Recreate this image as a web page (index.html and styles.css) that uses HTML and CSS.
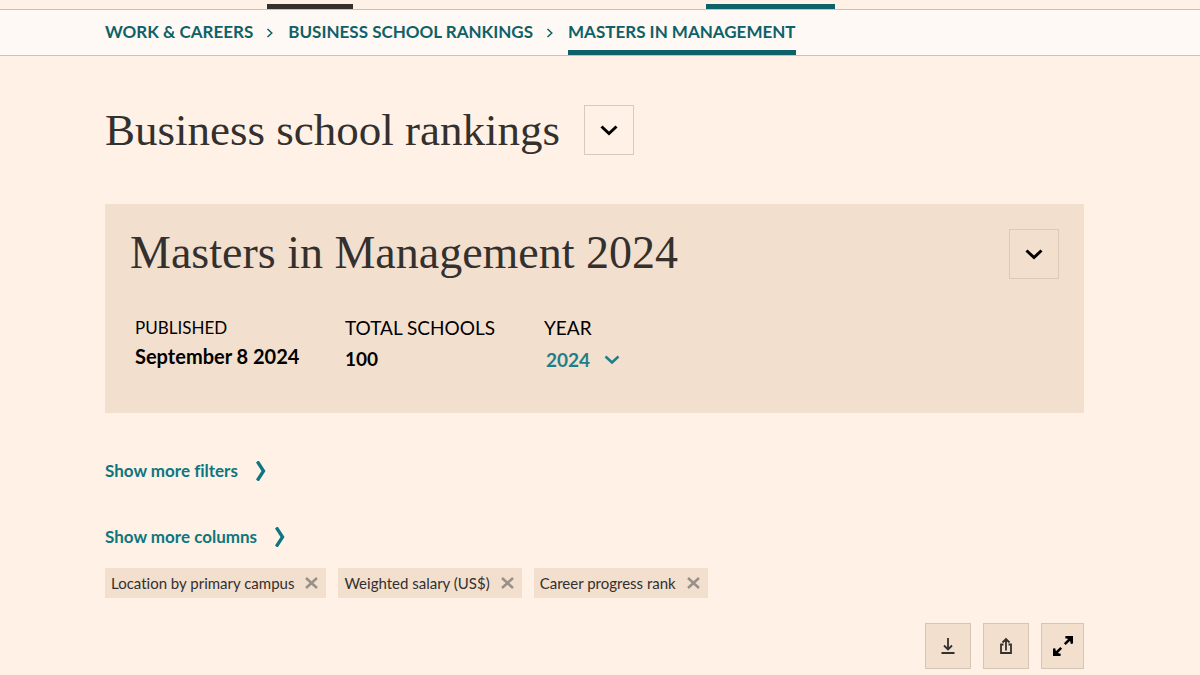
FILE: index.html
```html
<!DOCTYPE html>
<html lang="en">
<head>
<meta charset="utf-8">
<meta name="viewport" content="width=device-width, initial-scale=1">
<title>Masters in Management 2024 - Business school rankings</title>
<link rel="stylesheet" href="styles.css">
</head>
<body>
<header>
  <div class="main-nav"><span class="nav-mark nav-mark-dark"></span><span class="nav-mark nav-mark-teal"></span></div>
  <nav class="crumb-bar" aria-label="Breadcrumb">
    <a class="crumb" href="#">WORK &amp; CAREERS</a>
    <svg class="crumb-arrow" viewBox="0 0 8 10" aria-hidden="true"><path d="M1.5 1 5.8 5 1.5 9"/></svg>
    <a class="crumb" href="#">BUSINESS SCHOOL RANKINGS</a>
    <svg class="crumb-arrow" viewBox="0 0 8 10" aria-hidden="true"><path d="M1.5 1 5.8 5 1.5 9"/></svg>
    <a class="crumb crumb-current" href="#" aria-current="page">MASTERS IN MANAGEMENT</a>
  </nav>
</header>
<main class="page">
  <div class="title-row">
    <h1 class="title title-page">Business school rankings</h1>
    <button class="toggle" type="button" aria-label="Choose ranking"><svg class="toggle-icon" viewBox="0 0 18 12" aria-hidden="true"><path d="M1.5 2.500 9 9.500 16.500 2.500"/></svg></button>
  </div>
  <section class="panel">
    <div class="panel-head">
      <h2 class="title">Masters in Management 2024</h2>
      <button class="toggle" type="button" aria-label="Show details"><svg class="toggle-icon" viewBox="0 0 18 12" aria-hidden="true"><path d="M1.500 2.500 9 9.500 16.500 2.500"/></svg></button>
    </div>
    <div class="facts">
      <div class="fact fact-date"><span class="fact-label">PUBLISHED</span><strong class="fact-value">September 8 2024</strong></div>
      <div class="fact fact-total"><span class="fact-label">TOTAL SCHOOLS</span><strong class="fact-value">100</strong></div>
      <div class="fact">
        <label class="fact-label" for="year">YEAR</label>
        <div class="year">
          <select class="year-select" id="year"><option>2024</option></select>
          <svg class="year-icon" viewBox="0 0 16 10" aria-hidden="true"><path d="M1.500 1.500 8 7.500 14.500 1.500"/></svg>
        </div>
      </div>
    </div>
  </section>
  <div class="more">
    <button class="more-button" type="button">Show more filters<svg class="more-icon" viewBox="0 0 10 20" aria-hidden="true"><path d="M0 1.500 1.800 0H3L9.500 10 3 20H1.800L0 18.500 5.500 10Z"/></svg></button>
    <button class="more-button" type="button">Show more columns<svg class="more-icon" viewBox="0 0 10 20" aria-hidden="true"><path d="M0 1.500 1.800 0H3L9.500 10 3 20H1.800L0 18.500 5.500 10Z"/></svg></button>
  </div>
  <div class="tags">
    <button class="tag" type="button">Location by primary campus<svg class="tag-icon" viewBox="0 0 13 12" aria-hidden="true"><path d="M1 1 12 11M12 1 1 11"/></svg></button>
    <button class="tag" type="button">Weighted salary (US$)<svg class="tag-icon" viewBox="0 0 13 12" aria-hidden="true"><path d="M1 1 12 11M12 1 1 11"/></svg></button>
    <button class="tag" type="button">Career progress rank<svg class="tag-icon" viewBox="0 0 13 12" aria-hidden="true"><path d="M1 1 12 11M12 1 1 11"/></svg></button>
  </div>
  <div class="tools">
    <button class="tool" type="button" aria-label="Download"><svg class="tool-icon" viewBox="0 0 22 22" aria-hidden="true"><path class="line" d="M11 3V14.500M7 10.500 11 14.500 15 10.500M4.500 18H17.500"/></svg></button>
    <button class="tool" type="button" aria-label="Share"><svg class="tool-icon" viewBox="0 0 22 22" aria-hidden="true"><path class="line" d="M11 15.500V4.500M7.500 7.500 11 4 14.500 7.500M8.500 9.500H6V18H16V9.500H13.500"/></svg></button>
    <button class="tool tool-narrow" type="button" aria-label="Expand table"><svg class="tool-icon" viewBox="0 0 22 22" aria-hidden="true"><path class="expand-line" d="M12.800 9.200 18 4M4 18 9.200 12.800"/><path class="expand-head" d="M13.500 1H21V8.500L18.800 9 18.300 6.500 15.500 3.700 13.200 3.200ZM1 13.500V21H8.500L8.800 18.800 6.500 18.300 3.700 15.500 3.200 13.200Z"/></svg></button>
  </div>
</main>
</body>
</html>
```
FILE: styles.css
```css
* { box-sizing: border-box; }

body {
  margin: 0;
  background: #fff1e5;
  color: #33302e;
  font-family: Lato, "Open Sans", sans-serif;
  font-variant-ligatures: none;
}

button {
  margin: 0;
  border: 0;
  padding: 0;
  background: none;
  color: inherit;
  font: inherit;
  font-variant-ligatures: none;
  cursor: pointer;
}

svg { display: block; flex: none; fill: none; stroke: currentColor; }

.main-nav {
  display: flex;
  align-items: flex-end;
  height: 9px;
  padding-left: 267px;
  gap: 353px;
}

.nav-mark { height: 5px; }
.nav-mark-dark { width: 86px; background: #33302e; }
.nav-mark-teal { width: 129px; background: #0d6168; }

.crumb-bar {
  display: flex;
  align-items: center;
  height: 47px;
  padding-left: 105px;
  border-top: 1px solid #ccc1b7;
  border-bottom: 1px solid #ccc1b7;
  background: #fff9f5;
  color: #0d6168;
}

.crumb {
  height: 100%;
  border-bottom: 5px solid transparent;
  padding-top: 2px;
  color: inherit;
  font-size: 17px;
  font-weight: 700;
  line-height: 40px;
  text-decoration: none;
  white-space: nowrap;
}

.crumb-current { border-color: #0d6168; }
.crumb-arrow { width: 8px; height: 10px; margin: 0 14px 0 13px; stroke-width: 1.5; }

.page { padding: 49px 116px 6px 105px; }

.title-row { display: flex; align-items: center; gap: 24px; }

.title {
  margin: 0;
  font-family: "Liberation Serif", serif;
  font-size: 46px;
  font-weight: 400;
  line-height: 48px;
}

.title-page { font-size: 45px; }

.toggle {
  display: flex;
  align-items: center;
  justify-content: center;
  width: 50px;
  height: 50px;
  border: 1px solid #d9cabb;
  color: #000;
}

.toggle-icon { width: 18px; height: 12px; stroke-width: 3; }

.panel {
  margin-top: 49px;
  padding: 25px;
  min-height: 209px;
  background: #f2dfce;
}

.panel-head { display: flex; justify-content: space-between; }

.facts { display: flex; margin-top: 35px; padding-left: 5px; color: #000; }
.fact { display: flex; flex-direction: column; }
.fact-date { width: 210px; }
.fact-total { width: 199px; }
.fact-label { font-size: 19px; line-height: 28px; }
.fact-value { font-size: 19px; font-weight: 700; line-height: 34px; }
.fact-date .fact-label { font-size: 17px; }
.fact-date .fact-value { font-size: 20px; line-height: 28px; }

.year { display: grid; align-items: center; width: 76px; color: #1f7f88; }

.year-select {
  grid-area: 1 / 1;
  appearance: none;
  margin: 0;
  border: 0;
  padding: 0 0 0 2px;
  background: none;
  color: inherit;
  font: 700 19px/36px Lato, sans-serif;
}

.year-icon {
  grid-area: 1 / 1;
  justify-self: end;
  width: 16px;
  height: 10px;
  stroke-width: 2.5;
  pointer-events: none;
}

.more {
  display: flex;
  flex-direction: column;
  align-items: flex-start;
  gap: 42px;
  margin-top: 46px;
}

.more-button {
  display: flex;
  align-items: center;
  gap: 18px;
  color: #0d7680;
  font-size: 17px;
  font-weight: 700;
  line-height: 24px;
}

.more-icon { width: 10px; height: 20px; fill: currentColor; stroke: none; }

.tags { display: flex; flex-wrap: wrap; gap: 12px; margin-top: 19px; }

.tag {
  display: flex;
  align-items: center;
  gap: 11px;
  padding: 0 8px 0 6px;
  background: #f2dfce;
  font-size: 15px;
  line-height: 30px;
}

.tag-icon { width: 13px; height: 12px; color: #999089; stroke-width: 2.5; }

.tools { display: flex; justify-content: flex-end; gap: 12px; margin-top: 25px; }

.tool {
  display: flex;
  align-items: center;
  justify-content: center;
  width: 46px;
  height: 46px;
  border: 1px solid #d5c5b5;
  background: #f2dfce;
  color: #33302e;
}

.tool-narrow { width: 43px; color: #000; }
.tool-icon { width: 22px; height: 22px; }
.line { stroke-width: 1.8; }
.expand-line { stroke-width: 2.5; }
.expand-head { fill: currentColor; stroke: none; }
```
